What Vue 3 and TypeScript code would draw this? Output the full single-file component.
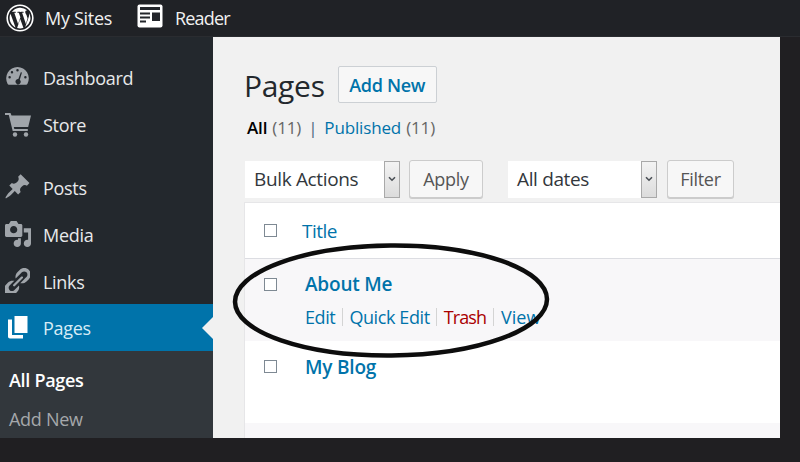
<script setup lang="ts">
interface Item { label: string; icon: string; gapBefore?: boolean }
const items: Item[] = [
  { label: 'Dashboard', icon: 'dash' },
  { label: 'Store', icon: 'store' },
  { label: 'Posts', icon: 'posts', gapBefore: true },
  { label: 'Media', icon: 'media' },
  { label: 'Links', icon: 'links' }
]
</script>

<template>
  <div class="screen">
    <header class="topbar">
      <svg class="wp" viewBox="0 0 28 28" width="28" height="28">
        <circle cx="14" cy="14" r="12.8" fill="none" stroke="#fff" stroke-width="1.6" />
        <path fill="#fff" d="M3.600 14c0 4.100 2.400 7.700 5.900 9.400L4.500 9.800A10.400 10.400 0 0 0 3.600 14zM21.100 13.500c0-1.300-.5-2.200-.9-2.900-.5-.9-1-1.600-1-2.500 0-1 .8-1.900 1.800-1.900h.1A10.400 10.400 0 0 0 6 7.900h.7c1.100 0 2.800-.1 2.800-.1.600 0 .6.800 0 .9 0 0-.6.100-1.200.1l3.800 11.300 2.300-6.900-1.600-4.400c-.6 0-1.100-.1-1.100-.1-.6 0-.5-.9 0-.9 0 0 1.700.1 2.800.1 1.100 0 2.800-.1 2.800-.1.600 0 .6.800 0 .9 0 0-.6.100-1.200.1l3.800 11.200 1-3.500c.5-1.300.7-2.300.7-3.100zM14.200 14.900l-3.100 9.100a10.400 10.400 0 0 0 6.400-.2l-.1-.1zM23.100 9c0 .4.100.8.100 1.200 0 1.100-.2 2.300-.8 3.800l-3.200 9.100A10.400 10.400 0 0 0 23.100 9z" />
      </svg>
      <span class="top-label mysites">My Sites</span>
      <svg class="reader" viewBox="0 0 26 24" width="26" height="24">
        <rect x="0.500" y="0.500" width="25" height="23" rx="2" fill="#fff" />
        <rect x="3" y="3" width="20" height="3" fill="#23262b" />
        <rect x="3" y="8.500" width="10" height="2" fill="#23262b" />
        <rect x="3" y="12.500" width="10" height="2" fill="#23262b" />
        <rect x="3" y="16.500" width="6" height="2" fill="#23262b" />
        <rect x="15" y="8.500" width="8" height="8.500" fill="#23262b" />
      </svg>
      <span class="top-label reader-label">Reader</span>
    </header>

    <div class="body">
      <aside class="sidebar">
        <nav class="menu">
          <a v-for="item in items" :key="item.label" class="menu-item" :class="{ gap: item.gapBefore }">
            <span class="mi">
              <svg v-if="item.icon === 'dash'" viewBox="0 0 24 20" width="23" height="19">
                <path fill="#a0a5aa" fill-rule="evenodd" d="M12 0a12 12 0 0 1 10.500 17.600c-.3.600-.8 1-1.500 1H3c-.7 0-1.200-.4-1.500-1A12 12 0 0 1 12 0zM12 2.200a1.300 1.300 0 1 0 0 2.600 1.300 1.300 0 0 0 0-2.600zM6.200 4.300a1.300 1.300 0 1 0 0 2.600 1.300 1.300 0 0 0 0-2.600zM3.700 9.600a1.300 1.300 0 1 0 0 2.600 1.300 1.300 0 0 0 0-2.600zM20.300 9.600a1.300 1.300 0 1 0 0 2.600 1.300 1.300 0 0 0 0-2.600zM15.500 5.500l-2.600 7.200a2.800 2.800 0 1 0 1.500.6l2.300-7.400z" />
              </svg>
              <svg v-else-if="item.icon === 'store'" class="store-icon" viewBox="0 0 26 24" width="26" height="24">
                <path fill="#a0a5aa" d="M0 0h5.500l1 2.500H26l-2.800 11.500H8.800l.5 2h13.500v2H7.700L3.800 2H0z" />
                <circle cx="10" cy="21.500" r="2.200" fill="#a0a5aa" />
                <circle cx="21" cy="21.500" r="2.200" fill="#a0a5aa" />
              </svg>
              <svg v-else-if="item.icon === 'posts'" viewBox="1 1 18 18" width="25" height="25">
                <path fill="#a0a5aa" d="M10.440 3.020l1.820-1.820 6.360 6.350-1.830 1.820c-1.050-.68-2.480-.57-3.410.36l-.75.750c-.92.930-1.040 2.350-.35 3.410l-1.830 1.820-2.410-2.410-2.800 2.790c-.42.420-3.380 2.710-3.800 2.290s1.860-3.390 2.280-3.810l2.790-2.790L4.100 9.360l1.830-1.820c1.050.690 2.480.570 3.400-.36l.75-.750c.930-.920 1.050-2.350.36-3.410z" />
              </svg>
              <svg v-else-if="item.icon === 'media'" viewBox="1 1 18 18" width="26" height="26">
                <path fill="#a0a5aa" d="M13 11V4c0-.55-.45-1-1-1h-1.670L9 1H5L3.670 3H2c-.55 0-1 .45-1 1v7c0 .55.45 1 1 1h10c.55 0 1-.45 1-1zM7 4.500c1.380 0 2.500 1.120 2.500 2.500S8.380 9.500 7 9.500 4.500 8.380 4.500 7 5.620 4.500 7 4.500zM14 6h5v10.500c0 1.380-1.120 2.500-2.500 2.500S14 17.880 14 16.500s1.120-2.500 2.500-2.500c.17 0 .34.020.5.050V9h-3V6zm-4 8.050V13h2v3.500c0 1.380-1.120 2.500-2.500 2.500S7 17.880 7 16.500 8.120 14 9.500 14c.17 0 .34.020.5.050z" />
              </svg>
              <svg v-else-if="item.icon === 'links'" viewBox="2 1.500 16.500 16.500" width="25" height="25">
                <path fill="#a0a5aa" d="M17.740 2.760c1.680 1.690 1.680 4.410 0 6.100l-1.530 1.520c-1.120 1.120-2.700 1.500-4.130 1.130l2.570-2.570.76-.76.76-.76c.84-.84.84-2.200 0-3.040-.84-.84-2.200-.84-3.040 0l-.76.76-3.330 3.330c-.37-1.430.01-3.010 1.130-4.130l1.520-1.530c1.690-1.680 4.420-1.680 6.100 0zM8.590 13.430l5.100-5.100c.3-.3.3-.78 0-1.070-.3-.3-.78-.3-1.080 0l-5.100 5.100c-.3.300-.3.780 0 1.070.3.300.78.300 1.080 0zm-.51 2.690c-.84.840-2.200.840-3.040 0-.84-.84-.84-2.200 0-3.040l3.090-3.090c-1.430-.37-3.010.010-4.130 1.130l-1.530 1.520c-1.680 1.690-1.680 4.420 0 6.100 1.690 1.680 4.410 1.680 6.100 0l1.520-1.530c1.120-1.120 1.500-2.700 1.130-4.130z" />
              </svg>
            </span>
            <span class="ml">{{ item.label }}</span>
          </a>
          <a class="menu-item current">
            <span class="mi">
              <svg viewBox="0 0 20 23" width="20" height="23">
                <path fill="#fff" d="M6.500 0H19.500V17H6.500z" />
                <path fill="#fff" d="M0 3.500h4V19h11v3.500H2c-1.200 0-2-.8-2-2z" />
              </svg>
            </span>
            <span class="ml pages-label">Pages</span>
            <span class="notch"></span>
          </a>
        </nav>
        <div class="submenu">
          <a class="sub strong">All Pages</a>
          <a class="sub">Add New</a>
        </div>
      </aside>

      <main class="content">
        <div class="title-row">
          <h1 class="title">Pages</h1>
          <a class="add-new">Add New</a>
        </div>
        <div class="filters">
          <b class="all">All</b>
          <span class="count">(11)</span>
          <span class="pipe">|</span>
          <a class="link">Published</a>
          <span class="count">(11)</span>
        </div>
        <div class="actions">
          <div class="select bulk">
            <span class="select-text">Bulk Actions</span>
            <span class="arrow"><svg viewBox="0 0 8 6" width="8" height="6"><path d="M1 1.200l3 3 3-3" fill="none" stroke="#4a4f55" stroke-width="1.600" /></svg></span>
          </div>
          <button class="btn apply">Apply</button>
          <div class="select dates">
            <span class="select-text">All dates</span>
            <span class="arrow"><svg viewBox="0 0 8 6" width="8" height="6"><path d="M1 1.200l3 3 3-3" fill="none" stroke="#4a4f55" stroke-width="1.600" /></svg></span>
          </div>
          <button class="btn filter">Filter</button>
        </div>

        <div class="table">
          <div class="row head">
            <span class="check"></span>
            <a class="head-title">Title</a>
          </div>
          <div class="row page tinted">
            <span class="check"></span>
            <div class="cell">
              <a class="page-title">About Me</a>
              <div class="row-actions">
                <a class="act">Edit</a><i class="sep"></i>
                <a class="act">Quick Edit</a><i class="sep"></i>
                <a class="act trash">Trash</a><i class="sep"></i>
                <a class="act view">View</a>
              </div>
            </div>
          </div>
          <div class="row page">
            <span class="check"></span>
            <div class="cell low">
              <a class="page-title">My Blog</a>
            </div>
          </div>
        </div>
      </main>
    </div>

    <svg class="ring" width="800" height="462" viewBox="0 0 800 462">
      <ellipse cx="391" cy="300.500" rx="156" ry="55" transform="rotate(-0.500 391 300.500)" fill="none" stroke="#0d0d0d" stroke-width="4.500" />
    </svg>
  </div>
</template>

<style>
html, body { margin: 0; background: #201f22; }
</style>

<style scoped>
.screen {
  position: relative;
  width: 800px;
  height: 462px;
  overflow: hidden;
  background: #201f22;
  font-family: "Open Sans", "Noto Sans", sans-serif;
}
.topbar {
  height: 37px;
  background: #202226;
  border-bottom: 1px solid #2a2c30;
  box-sizing: border-box;
  display: flex;
  align-items: center;
  color: #f1f1f1;
  font-size: 18px;
}
.wp { margin-left: 6px; margin-right: 11px; flex: none; }
.mysites { width: 92px; }
.reader { margin-right: 12px; margin-top: -5px; flex: none; }
.top-label { letter-spacing: -0.300px; }
.reader-label { letter-spacing: -0.800px; }
.body {
  display: flex;
  height: 401px;
  width: 780px;
}
.sidebar {
  width: 213px;
  flex: none;
  background: #23282d;
  display: flex;
  flex-direction: column;
}
.menu { padding-top: 16px; display: flex; flex-direction: column; }
.menu-item {
  position: relative;
  height: 47px;
  display: flex;
  align-items: center;
  color: #e8e9ea;
  font-size: 18px;
  letter-spacing: -0.300px;
}
.menu-item.gap { margin-top: 16px; }
.mi {
  width: 43px;
  flex: none;
  display: flex;
  justify-content: center;
  box-sizing: border-box;
  padding-left: 2px;
  padding-right: 10px;
}
.store-icon { margin-top: 2px; }
.ml { line-height: 1; padding-top: 2px; }
.pages-label { padding-top: 0; }
.current { background: #0073aa; color: #d7ecf6; }
.notch {
  position: absolute;
  right: 0;
  top: 13px;
  border-top: 11px solid transparent;
  border-bottom: 11px solid transparent;
  border-right: 11px solid #f1f1f1;
}
.submenu {
  flex: 1;
  background: #32373c;
  padding: 17px 0 0 9px;
  display: flex;
  flex-direction: column;
  gap: 15px;
  font-size: 18px;
  letter-spacing: -0.300px;
  color: #a5a8ab;
  line-height: 24px;
}
.strong { color: #fff; font-weight: 600; }
.content {
  flex: 1;
  background: #f1f1f1;
  padding: 29px 0 0 31px;
  position: relative;
}
.title-row { display: flex; align-items: center; height: 37px; }
.title { margin: 2px 0 0; font-size: 30px; font-weight: 400; color: #23282d; letter-spacing: -0.300px; }
.add-new {
  margin-left: 13px;
  width: 99px;
  height: 37px;
  box-sizing: border-box;
  border: 1px solid #ccd0d4;
  border-radius: 2px;
  background: #f7f7f7;
  color: #0073aa;
  font-weight: 600;
  font-size: 18px;
  letter-spacing: -0.300px;
  display: flex;
  align-items: center;
  justify-content: center;
}
.filters {
  margin-top: 13px;
  padding-left: 3px;
  font-size: 17px;
  letter-spacing: -0.150px;
  color: #666;
  display: flex;
  gap: 5px;
  line-height: 24px;
}
.all { color: #000; font-weight: 600; }
.pipe { color: #4a6a80; margin: 0 2px; }
.link { color: #0073aa; }
.actions {
  margin-top: 20px;
  padding-left: 1px;
  display: flex;
  align-items: center;
  height: 38px;
}
.select {
  height: 37px;
  box-sizing: border-box;
  background: #fff;
  display: flex;
  align-items: center;
  justify-content: space-between;
  color: #32373c;
  font-size: 19px;
  letter-spacing: -0.350px;
}
.select-text { padding-left: 9px; }
.arrow {
  width: 16px;
  height: 37px;
  box-sizing: border-box;
  border: 1px solid #a9a9a9;
  background: linear-gradient(#f3f3f3, #dcdcdc);
  display: flex;
  align-items: center;
  justify-content: center;
}
.bulk { width: 155px; }
.dates { width: 149px; }
.btn {
  height: 38px;
  box-sizing: border-box;
  border: 1px solid #ccc;
  border-radius: 3px;
  background: #f7f7f7;
  box-shadow: 0 1px 0 #ccc;
  color: #555;
  font-family: inherit;
  font-size: 18px;
  letter-spacing: -0.300px;
  padding: 0;
}
.apply { width: 74px; margin-left: 9px; margin-right: 25px; }
.filter { width: 67px; margin-left: 10px; }
.table {
  margin-top: 5px;
  height: 235px;
  border-left: 1px solid #e6e6e8;
  box-shadow: 0 -1px 0 #e6e6e8;
  background: linear-gradient(#fff 220px, #f8f7f9 220px);
}
.row { display: flex; box-sizing: border-box; padding-left: 19px; }
.head { height: 56px; border-bottom: 1px solid #dcdde2; align-items: center; background: #fff; }
.head-title { margin-left: 25px; color: #0073aa; font-size: 19px; letter-spacing: -0.500px; }
.check {
  width: 13px;
  height: 13px;
  box-sizing: border-box;
  border: 1px solid #7e8993;
  background: #fff;
  flex: none;
}
.page { height: 82px; align-items: flex-start; }
.page .check { margin-top: 19px; }
.tinted { background: #f8f7f9; }
.cell { margin-left: 28px; padding-top: 11px; }
.cell.low { padding-top: 12px; }
.page-title { display: block; font-size: 19px; font-weight: 600; color: #0073aa; letter-spacing: -0.200px; line-height: 28px; }
.row-actions { margin-top: 5px; display: flex; align-items: center; font-size: 18px; letter-spacing: -0.400px; line-height: 28px; color: #0073aa; }
.sep { width: 1px; height: 18px; background: #d4d4d4; margin: 0 6.500px; }
.trash { color: #a00; letter-spacing: -0.900px; }
.view { margin-left: 1px; letter-spacing: 0; }
.ring { position: absolute; left: 0; top: 0; pointer-events: none; }
</style>
